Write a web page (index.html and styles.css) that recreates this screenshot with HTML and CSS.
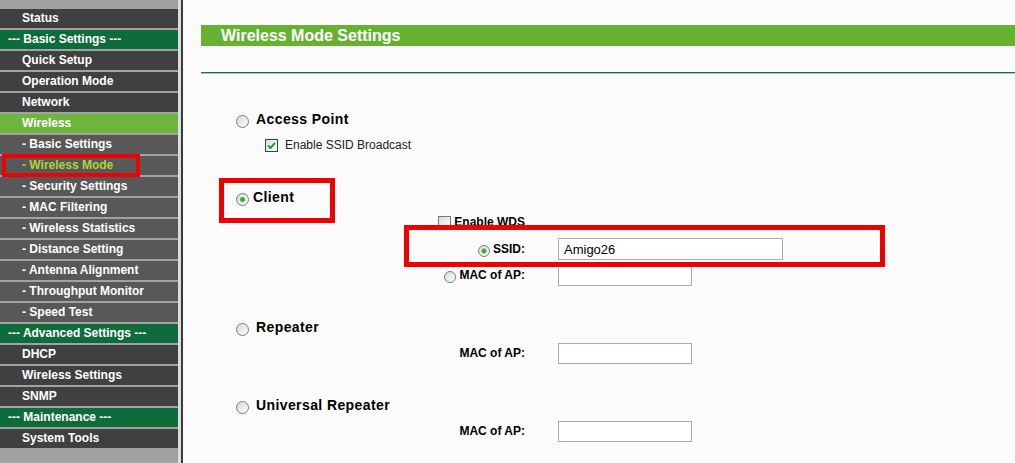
FILE: index.html
```html
<!DOCTYPE html>
<html lang="en">

<head>
    <meta charset="UTF-8">
    <meta name="viewport" content="width=device-width, initial-scale=1.0">
    <title>Wireless Mode Settings</title>
    <link rel="stylesheet" href="styles.css">
</head>

<body>
    <!-- Left menu -->
    <ul class="menu">
        <li class="item">Status</li>
        <li class="item group">--- Basic Settings ---</li>
        <li class="item">Quick Setup</li>
        <li class="item">Operation Mode</li>
        <li class="item">Network</li>
        <li class="item active">Wireless</li>
        <li class="item sub">- Basic Settings</li>
        <li class="item sub current">- Wireless Mode<span class="mark mark-menu"></span></li>
        <li class="item sub">- Security Settings</li>
        <li class="item sub">- MAC Filtering</li>
        <li class="item sub">- Wireless Statistics</li>
        <li class="item sub">- Distance Setting</li>
        <li class="item sub">- Antenna Alignment</li>
        <li class="item sub">- Throughput Monitor</li>
        <li class="item sub">- Speed Test</li>
        <li class="item group">--- Advanced Settings ---</li>
        <li class="item">DHCP</li>
        <li class="item">Wireless Settings</li>
        <li class="item">SNMP</li>
        <li class="item group">--- Maintenance ---</li>
        <li class="item">System Tools</li>
    </ul>
    <div class="divider"></div>

    <!-- Main panel -->
    <main class="content">
        <h1 class="title">Wireless Mode Settings</h1>
        <div class="rule"></div>

        <div class="mode first">
            <span class="radio"></span>
            <span class="mode-name">Access Point</span>
        </div>
        <div class="option">
            <span class="check on">
                <svg width="11" height="11" viewBox="0 0 11 11"><path d="M2 5.5 L4.5 8 L9 3" fill="none" stroke="#21a121" stroke-width="2"/></svg>
            </span>
            Enable SSID Broadcast
        </div>

        <div class="mode client">
            <span class="radio on"></span>
            <span class="mode-name tight">Client</span>
        </div>
        <div class="field tight">
            <div class="field-label"><span class="check"></span>Enable WDS</div>
        </div>
        <div class="field">
            <div class="field-label"><span class="radio small on"></span>SSID:</div>
            <input class="text wide" type="text" value="Amigo26">
        </div>
        <div class="field tight">
            <div class="field-label"><span class="radio small"></span>MAC of AP:</div>
            <input class="text" type="text">
        </div>

        <div class="mode">
            <span class="radio"></span>
            <span class="mode-name">Repeater</span>
        </div>
        <div class="field">
            <div class="field-label">MAC of AP:</div>
            <input class="text" type="text">
        </div>

        <div class="mode">
            <span class="radio"></span>
            <span class="mode-name">Universal Repeater</span>
        </div>
        <div class="field">
            <div class="field-label">MAC of AP:</div>
            <input class="text" type="text">
        </div>
    </main>

    <!-- annotation boxes -->
    <span class="mark mark-client"></span>
    <span class="mark mark-ssid"></span>
</body>

</html>
```

FILE: styles.css
```css
body {
    margin: 0;
    display: flex;
    height: 100vh;
    overflow: hidden;
    position: relative;
    font-family: "Liberation Sans", Arial, sans-serif;
    background-color: #fbfbfb;
}

.menu {
    list-style: none;
    margin: 0;
    padding: 9px 0 0;
    width: 178px;
    flex-shrink: 0;
    background-color: #a2a2a2;
    display: flex;
    flex-direction: column;
    gap: 2px;
}

.item {
    position: relative;
    height: 19px;
    line-height: 19px;
    padding-left: 22px;
    background-color: #404040;
    color: #fff;
    font-size: 12px;
    font-weight: bold;
    white-space: nowrap;
}

.item.sub {
    background-color: #585858;
}

.item.group {
    padding-left: 8px;
    background-color: #0e6b3a;
}

.item.active {
    background-color: #6bb63b;
}

.item.current {
    color: #b0d33a;
}

.divider {
    width: 0;
    flex-shrink: 0;
    border-left: 3px solid #dcdcdc;
    border-right: 2px solid #3a3a3a;
}

.content {
    flex: 1;
    padding-left: 18px;
}

.title {
    margin: 25px 0 0;
    height: 21px;
    line-height: 21px;
    padding-left: 20px;
    background-color: #66b132;
    color: #fff;
    font-size: 16px;
    font-weight: bold;
}

.rule {
    margin-top: 26px;
    border-top: 1px solid #22694f;
    border-bottom: 1px solid #a9c6b9;
}

.mode {
    display: flex;
    align-items: center;
    height: 20px;
    margin-top: 31px;
    padding-left: 35px;
}

.mode.first {
    margin-top: 35px;
}

.mode.client {
    margin-top: 32px;
}

.mode-name {
    margin-left: 7px;
    font-size: 14px;
    font-weight: bold;
    letter-spacing: 0.4px;
    color: #000;
}

.mode-name.tight {
    margin-left: 4px;
}

.radio {
    display: inline-block;
    box-sizing: border-box;
    width: 13px;
    height: 13px;
    margin-top: 5px;
    border: 1px solid #6f7f90;
    border-radius: 50%;
    background: linear-gradient(135deg, #d8d8d2, #ffffff);
}

.radio.small {
    width: 12px;
    height: 12px;
    margin: 3px 3px 0 0;
}

.radio.on {
    background: radial-gradient(circle, #27a327 0, #45b545 2px, #d9ecd9 3px, transparent 3.5px),
        linear-gradient(135deg, #d8d8d2, #ffffff);
}

.option {
    display: flex;
    align-items: center;
    height: 20px;
    margin-top: 6px;
    padding-left: 64px;
    font-size: 12px;
    color: #222;
}

.check {
    display: inline-flex;
    align-items: center;
    justify-content: center;
    box-sizing: border-box;
    width: 13px;
    height: 13px;
    margin-right: 7px;
    border: 1px solid #24455a;
    background: linear-gradient(135deg, #dcdcd6, #ffffff);
}

.field .check {
    margin-right: 3px;
    border-color: #7a7a7a;
}

.field {
    display: flex;
    align-items: center;
    height: 22px;
    margin-top: 5px;
}

.field.tight {
    margin-top: 4px;
}

.field-label {
    width: 324px;
    display: flex;
    align-items: center;
    justify-content: flex-end;
    font-size: 12px;
    font-weight: bold;
    color: #000;
}

.text {
    box-sizing: border-box;
    width: 134px;
    height: 21px;
    margin: 0 0 0 33px;
    padding: 0 5px;
    border: 1px solid #a5acb2;
    background-color: #fff;
    font-family: "Liberation Sans", Arial, sans-serif;
    font-size: 13px;
    color: #000;
    outline: none;
}

.text.wide {
    width: 225px;
    height: 22px;
}

/* red annotation boxes */
.mark {
    position: absolute;
    box-sizing: border-box;
    border: 5px solid #ee0000;
}

.mark-menu {
    left: 2px;
    top: -2px;
    width: 138px;
    height: 23px;
    border-width: 4px;
}

.mark-client {
    left: 219px;
    top: 178px;
    width: 116px;
    height: 45px;
}

.mark-ssid {
    left: 404px;
    top: 225px;
    width: 481px;
    height: 42px;
}
```
